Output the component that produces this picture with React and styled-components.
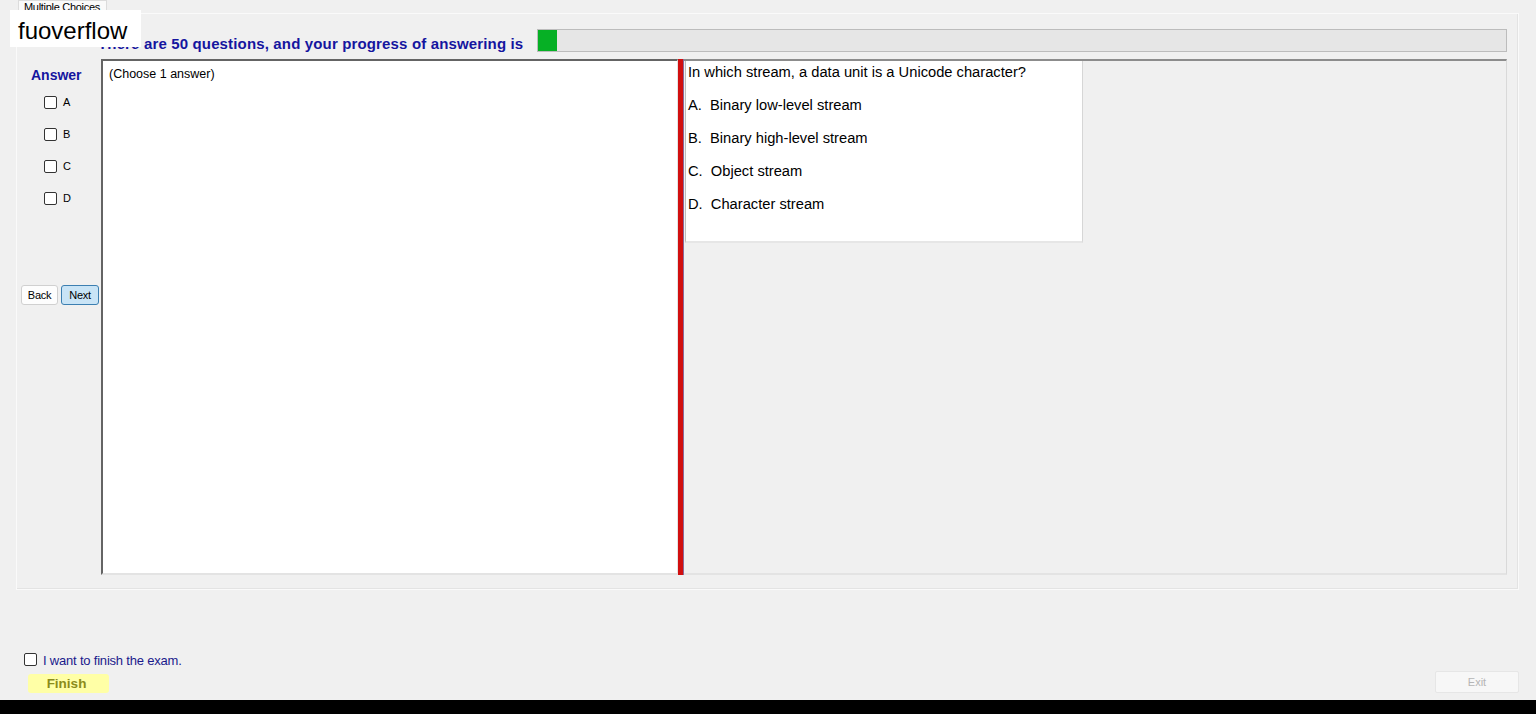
import React from 'react'
import styled, { createGlobalStyle } from 'styled-components'

const GlobalStyle = createGlobalStyle`
  html, body {
    margin: 0;
    padding: 0;
    background: #f0f0f0;
    font-family: "Liberation Sans", Arial, sans-serif;
  }
`

const options = ['A', 'B', 'C', 'D']
const answers = [
  'A.  Binary low-level stream',
  'B.  Binary high-level stream',
  'C.  Object stream',
  'D.  Character stream',
]

function App() {
  return (
    <>
      <GlobalStyle />
      <Page>
        <Brand>fuoverflow</Brand>
        <TabStrip>
          <Tab>Multiple Choices</Tab>
        </TabStrip>
        <TabPanel>
          <ProgressRow>
            <ProgressText>There are 50 questions, and your progress of answering is</ProgressText>
            <ProgressBar>
              <ProgressFill style={{ width: 19 }} />
            </ProgressBar>
          </ProgressRow>
          <MainRow>
            <AnswerColumn>
              <AnswerTitle>Answer</AnswerTitle>
              <OptionList>
                {options.map((o) => (
                  <Option key={o}>
                    <Box />
                    <span>{o}</span>
                  </Option>
                ))}
              </OptionList>
              <NavRow>
                <NavButton>Back</NavButton>
                <NavButton primary>Next</NavButton>
              </NavRow>
            </AnswerColumn>
            <AnswerArea>(Choose 1 answer)</AnswerArea>
            <Splitter />
            <QuestionPane>
              <QuestionBox>
                <QLine>In which stream, a data unit is a Unicode character?</QLine>
                {answers.map((a) => (
                  <QLine key={a}>{a}</QLine>
                ))}
              </QuestionBox>
            </QuestionPane>
          </MainRow>
        </TabPanel>
        <FinishCheck>
          <Box />
          <span>I want to finish the exam.</span>
        </FinishCheck>
        <BottomRow>
          <FinishButton>Finish</FinishButton>
          <ExitButton>Exit</ExitButton>
        </BottomRow>
        <Footer />
      </Page>
    </>
  )
}

export default App

const Page = styled.div`
  position: relative;
  height: 714px;
  display: flex;
  flex-direction: column;
  overflow: hidden;
`

const Brand = styled.div`
  position: absolute;
  left: 10px;
  top: 10px;
  width: 131px;
  height: 37px;
  background: #fff;
  font-size: 24px;
  color: #000;
  padding-left: 8px;
  box-sizing: border-box;
  line-height: 41px;
  z-index: 2;
`

const TabStrip = styled.div`
  display: flex;
  padding-left: 18px;
  height: 13px;
`

const Tab = styled.div`
  font-size: 11px;
  letter-spacing: -0.3px;
  color: #000;
  background: #fafafa;
  border: 1px solid #dcdcdc;
  border-bottom: none;
  padding: 0 6px 0 5px;
  line-height: 13px;
  height: 13px;
  box-sizing: border-box;
  overflow: hidden;
`

const TabPanel = styled.div`
  margin: 0 17px 0 16px;
  height: 577px;
  box-sizing: border-box;
  border: 1px solid #fafafa;
  box-shadow: inset -1px -1px 0 #e3e3e3;
  padding: 15px 11px 0 0;
  display: flex;
  flex-direction: column;
`

const ProgressRow = styled.div`
  display: flex;
  align-items: flex-end;
  height: 23px;
`

const ProgressText = styled.div`
  margin-left: 81px;
  font-size: 15px;
  letter-spacing: 0.15px;
  font-weight: bold;
  color: #15159f;
  width: 439px;
  white-space: nowrap;
  line-height: 15px;
  padding-bottom: 1px;
`

const ProgressBar = styled.div`
  flex: 1;
  height: 23px;
  box-sizing: border-box;
  background: #e6e6e6;
  border: 1px solid #bcbcbc;
  display: flex;
`

const ProgressFill = styled.div`
  background: #06b025;
  height: 100%;
`

const MainRow = styled.div`
  margin-top: 7px;
  display: flex;
  height: 516px;
`

const AnswerColumn = styled.div`
  width: 84px;
  display: flex;
  flex-direction: column;
`

const AnswerTitle = styled.div`
  margin: 9px 0 0 14px;
  font-size: 14px;
  font-weight: bold;
  color: #15159f;
  line-height: 14px;
`

const OptionList = styled.div`
  margin-top: 4px;
  display: flex;
  flex-direction: column;
`

const Option = styled.div`
  display: flex;
  align-items: center;
  gap: 6px;
  margin-left: 27px;
  height: 32px;
  font-size: 11px;
  color: #000;
`

const Box = styled.span`
  width: 11px;
  height: 11px;
  border: 1px solid #333;
  border-radius: 2px;
  background: #fff;
  flex: none;
`

const NavRow = styled.div`
  display: flex;
  gap: 3px;
  margin: 71px 0 0 4px;
`

const NavButton = styled.div`
  height: 20px;
  box-sizing: border-box;
  padding: 0 4px;
  display: flex;
  align-items: center;
  font-size: 11px;
  letter-spacing: -0.3px;
  border-radius: 3px;
  border: 1px solid ${(p) => (p.primary ? '#3c7fb1' : '#d0d0d0')};
  background: ${(p) => (p.primary ? '#c9e4f6' : '#fdfdfd')};
  color: #000;
  width: ${(p) => (p.primary ? '38px' : '37px')};
  justify-content: center;
`

const AnswerArea = styled.div`
  width: 577px;
  box-sizing: border-box;
  background: #fff;
  border-top: 2px solid #646464;
  border-left: 2px solid #646464;
  border-right: 1px solid #e3e3e3;
  border-bottom: 2px solid #e3e3e3;
  padding: 6px 6px;
  font-size: 12.5px;
  color: #000;
`

const Splitter = styled.div`
  width: 6px;
  background: #d10f0f;
  border-right: 1px solid #8a6a9a;
  box-sizing: border-box;
`

const QuestionPane = styled.div`
  flex: 1;
  border-top: 2px solid #8c8c8c;
  border-right: 1px solid #d9d9d9;
  border-bottom: 2px solid #e3e3e3;
  box-sizing: border-box;
  padding-left: 1px;
`

const QuestionBox = styled.div`
  width: 398px;
  height: 182px;
  box-sizing: border-box;
  background: #fff;
  border-left: 1px solid #bdbdbd;
  border-right: 1px solid #d6d6d6;
  border-bottom: 2px solid #e6e6e6;
  padding-left: 2px;
  display: flex;
  flex-direction: column;
`

const QLine = styled.div`
  font-size: 14.7px;
  line-height: 33px;
  height: 33px;
  color: #000;
  white-space: pre;
  &:first-child {
    margin-top: -5px;
  }
`

const FinishCheck = styled.div`
  margin: 62px 0 0 24px;
  display: flex;
  align-items: center;
  gap: 6px;
  font-size: 13px;
  letter-spacing: -0.2px;
  color: #1a1a8c;
  height: 14px;
  & > span:last-child {
    padding-top: 2px;
  }
`

const BottomRow = styled.div`
  display: flex;
  justify-content: space-between;
  align-items: flex-start;
  margin-top: 5px;
  padding: 0 17px 0 28px;
`

const FinishButton = styled.div`
  margin-top: 3px;
  width: 81px;
  height: 19px;
  background: #ffffa6;
  border-radius: 3px;
  font-size: 13.5px;
  font-weight: bold;
  color: #8b8b1a;
  display: flex;
  align-items: center;
  justify-content: center;
  padding-right: 4px;
  box-sizing: border-box;
`

const ExitButton = styled.div`
  width: 84px;
  height: 22px;
  box-sizing: border-box;
  background: #f7f7f7;
  border: 1px solid #e6e6e6;
  border-radius: 2px;
  font-size: 11px;
  color: #b5b5b5;
  display: flex;
  align-items: center;
  justify-content: center;
`

const Footer = styled.div`
  margin-top: auto;
  height: 14px;
  background: #000;
`
